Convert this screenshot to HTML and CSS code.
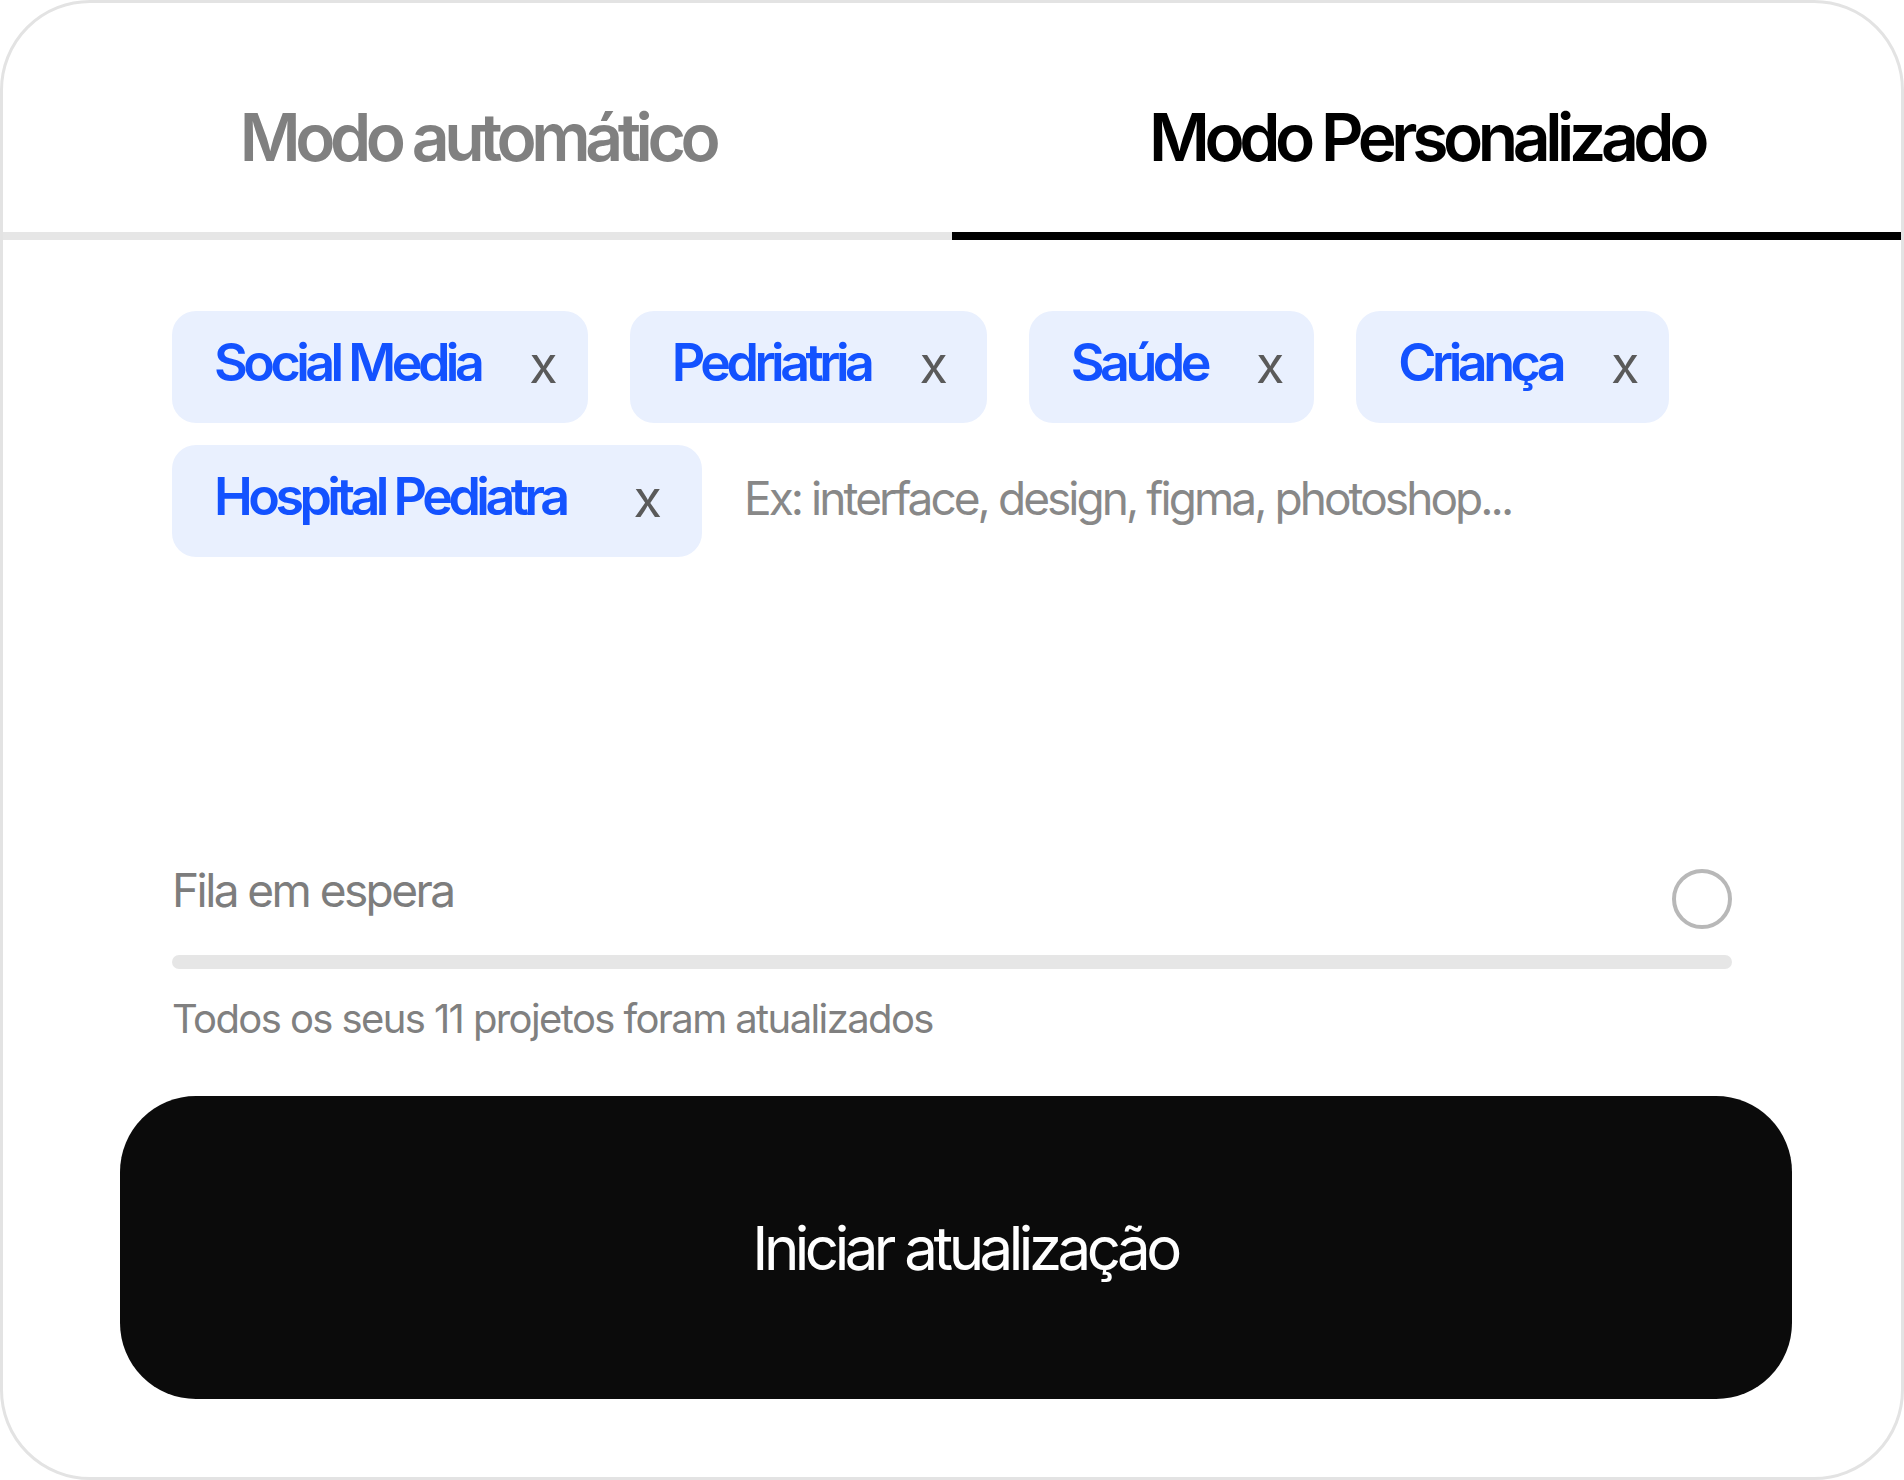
FILE: index.html
```html
<!DOCTYPE html>
<html lang="pt">
<head>
<meta charset="utf-8">
<title>Atualização de projetos</title>
<link rel="stylesheet" href="styles.css">
</head>
<body>
<div class="card">
  <div class="tabs">
    <div class="tab">Modo automático</div>
    <div class="tab tab-active">Modo Personalizado</div>
  </div>
  <div class="tags">
    <div class="tag"><span class="tag-label">Social Media</span><span class="tag-x">x</span></div>
    <div class="tag tag-pad"><span class="tag-label">Pedriatria</span><span class="tag-x">x</span></div>
    <div class="tag"><span class="tag-label">Saúde</span><span class="tag-x">x</span></div>
    <div class="tag"><span class="tag-label">Criança</span><span class="tag-x">x</span></div>
    <div class="tag tag-wide"><span class="tag-label">Hospital Pediatra</span><span class="tag-x">x</span></div>
    <div class="placeholder">Ex: interface, design, figma, photoshop...</div>
  </div>
  <div class="queue">
    <div class="queue-head">
      <span class="queue-title">Fila em espera</span>
      <span class="queue-circle"></span>
    </div>
    <div class="progress"></div>
    <div class="queue-note">Todos os seus 11 projetos foram atualizados</div>
  </div>
  <div class="btn-wrap">
    <button class="btn">Iniciar atualização</button>
  </div>
</div>
</body>
</html>
```
FILE: styles.css
```css
html, body {
  margin: 0;
  padding: 0;
  background: #ffffff;
}
body {
  font-family: Inter, "Noto Sans", sans-serif;
}
.card {
  box-sizing: border-box;
  width: 1904px;
  height: 1480px;
  border: 3px solid #e3e3e3;
  border-radius: 90px;
  overflow: hidden;
  background: #ffffff;
}
.tabs {
  display: grid;
  grid-template-columns: 1fr 1fr;
}
.tab {
  box-sizing: border-box;
  height: 237px;
  padding-top: 39px;
  display: flex;
  align-items: center;
  justify-content: center;
  font-size: 66px;
  font-weight: 600;
  letter-spacing: -0.082em;
  color: #808080;
  border-bottom: 8px solid #e6e6e6;
}
.tab-active {
  color: #000000;
  border-bottom-color: #000000;
}
.tags {
  display: flex;
  flex-wrap: wrap;
  align-items: center;
  gap: 22px 42px;
  margin-top: 71px;
  padding: 0 172px 0 169px;
}
.tag {
  box-sizing: border-box;
  height: 112px;
  display: flex;
  align-items: center;
  gap: 49px;
  padding: 0 30px 0 42px;
  background: #e9f0fe;
  border-radius: 24px;
}
.tag-pad {
  padding-right: 39px;
}
.tag-wide {
  gap: 68px;
  padding-right: 40px;
}
.tag-label {
  font-size: 52px;
  font-weight: 600;
  letter-spacing: -0.087em;
  color: #1352ff;
  margin-bottom: 10px;
}
.tag-x {
  font-size: 52px;
  font-weight: 400;
  color: #5a5a5a;
  margin-bottom: 6px;
}
.placeholder {
  font-size: 46px;
  font-weight: 400;
  letter-spacing: -0.064em;
  color: #888888;
  margin-bottom: 6px;
}
.queue {
  margin-top: 312px;
  padding: 0 169px;
}
.queue-head {
  display: flex;
  align-items: center;
  justify-content: space-between;
  height: 60px;
}
.queue-title {
  font-size: 46px;
  line-height: 56px;
  letter-spacing: -0.056em;
  color: #7d7d7d;
  margin-bottom: 18px;
}
.queue-circle {
  box-sizing: border-box;
  width: 60px;
  height: 60px;
  border: 4px solid #b8b8b8;
  border-radius: 50%;
}
.progress {
  height: 14px;
  margin-top: 26px;
  border-radius: 7px;
  background: #e6e6e6;
}
.queue-note {
  margin-top: 26px;
  font-size: 40px;
  line-height: 48px;
  letter-spacing: -0.04em;
  color: #808080;
}
.btn-wrap {
  padding: 0 109px 0 117px;
  margin-top: 53px;
}
.btn {
  display: block;
  width: 100%;
  height: 303px;
  padding: 0 0 0 18px;
  border: none;
  border-radius: 76px;
  background: #0b0b0b;
  color: #ffffff;
  font-family: Inter, "Noto Sans", sans-serif;
  font-size: 60px;
  font-weight: 400;
  letter-spacing: -0.075em;
}
```
